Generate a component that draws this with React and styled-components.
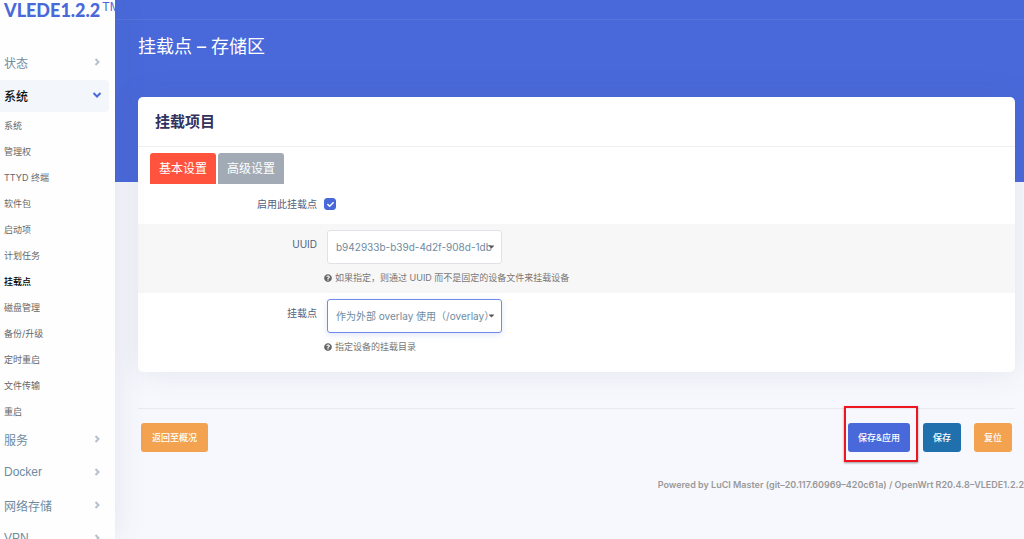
import * as React from 'react';
import styled, {createGlobalStyle} from 'styled-components';
import {FaCaretDown, FaCheck, FaQuestionCircle} from 'react-icons/fa';

const MENU = [
    {title: '状态'},
    {
        title: '系统',
        open: true,
        items: ['系统', '管理权', 'TTYD 终端', '软件包', '启动项', '计划任务', '挂载点', '磁盘管理', '备份/升级', '定时重启', '文件传输', '重启'],
    },
    {title: '服务'},
    {title: 'Docker'},
    {title: '网络存储'},
    {title: 'VPN'},
];

const GlobalStyle = createGlobalStyle`
  * { box-sizing: border-box; }
  body {
    margin: 0;
    background: #f7f8fd;
    font-family: Inter, "Noto Sans CJK SC", sans-serif;
  }
  button, select, input { font-family: inherit; }
`;

const Page = styled.div`
  display: flex;
  height: 100vh;
  overflow: hidden;
`;

const Sidebar = styled.nav`
  flex: 0 0 115px;
  overflow: hidden;
  background: #fefefe;
  box-shadow: 0 0 30px rgba(80, 90, 130, 0.12);
  z-index: 1;
`;

const Logo = styled.a`
  display: flex;
  align-items: flex-start;
  height: 47px;
  padding-left: 4px;
  color: #4969da;
  font-family: Lato, sans-serif;
  font-size: 18px;
  font-weight: 900;
  line-height: 20px;
  text-decoration: none;
  white-space: nowrap;
`;

const Trademark = styled.span`
  margin-left: 2px;
  font-family: "Liberation Sans", sans-serif;
  font-size: 12px;
  font-weight: 400;
  line-height: 14px;
`;

const MenuLink = styled.a`
  display: flex;
  align-items: center;
  justify-content: space-between;
  height: 32px;
  margin: 0 6px 1px 0;
  padding: 0 7px 2px 4px;
  border-radius: 0 4px 4px 0;
  background: ${props => props.$open ? '#f3f7fb' : 'transparent'};
  color: ${props => props.$open ? '#111' : '#6f8ba1'};
  font-family: "Liberation Sans", "Noto Sans CJK SC", sans-serif;
  font-size: 12px;
  font-weight: ${props => props.$open ? 500 : 400};
  text-decoration: none;
`;

const Arrow = styled.svg`
  width: 10px;
  height: 10px;
  fill: none;
  stroke: ${props => props.$open ? '#4969da' : '#b8c1ca'};
  stroke-width: 2;
`;

const SubMenu = styled.ul`
  margin: 0 0 -1px;
  padding: 0;
  list-style: none;
`;

const SubLink = styled.a`
  display: block;
  padding-left: 4px;
  color: ${props => props.$active ? '#000' : '#666'};
  font-size: 9px;
  font-weight: ${props => props.$active ? 500 : 400};
  line-height: 26px;
  text-decoration: none;
`;

const Main = styled.main`
  flex: 1;
  min-width: 0;
`;

const Banner = styled.header`
  height: 182px;
  background: #4969da;
`;

const TopBar = styled.div`
  height: 20px;
  border-bottom: 1px solid #5473dc;
`;

const PageTitle = styled.h2`
  margin: 0;
  padding: 15px 23px;
  color: #fff;
  font-size: 18px;
  font-weight: 400;
  line-height: 24px;
`;

const Content = styled.form`
  margin: -85px 9px 0 23px;
`;

const Card = styled.section`
  padding-bottom: 10px;
  border-radius: 5px;
  background: #fff;
  box-shadow: 0 0 30px rgba(80, 90, 130, 0.12);
`;

const CardTitle = styled.h3`
  margin: 0;
  padding: 0 17px;
  border-bottom: 1px solid #eef0f2;
  color: #32325d;
  font-size: 15px;
  font-weight: 700;
  line-height: 49px;
`;

const Tabs = styled.div`
  display: flex;
  gap: 2px;
  padding: 6px 12px 0;
`;

const Tab = styled.button`
  height: 31px;
  padding: 0 9px 2px;
  border: 0;
  border-radius: 3px 3px 0 0;
  background: ${props => props.$active ? '#ff533d' : '#a2abb5'};
  color: #fff;
  font-size: 12px;
  cursor: pointer;
`;

const Row = styled.div`
  display: grid;
  grid-template-columns: 179px 1fr;
  column-gap: 7px;
  padding: ${props => props.$compact ? '10px 0' : '6px 0 5px'};
  background: ${props => props.$shaded ? '#f7f7f7' : 'transparent'};
`;

const Label = styled.label`
  padding-top: ${props => props.$compact ? 0 : 4}px;
  color: #525f7f;
  font-size: 10px;
  line-height: 20px;
  text-align: right;
`;

const CheckWrap = styled.span`
  display: grid;
  width: 12px;
  height: 12px;
  margin: 4px 0;
  place-items: center;

  > * { grid-area: 1 / 1; }

  svg {
    width: 7px;
    height: 7px;
    color: #fff;
    pointer-events: none;
    z-index: 1;
  }
`;

const Checkbox = styled.input`
  width: 12px;
  height: 12px;
  margin: 0;
  border: 1px solid #4969da;
  border-radius: 3px;
  background: #4969da;
  appearance: none;
`;

const SelectWrap = styled.div`
  position: relative;
  width: 175px;
  margin-left: 3px;

  svg {
    position: absolute;
    top: 12px;
    right: 6px;
    width: 9px;
    height: 9px;
    color: #555;
    pointer-events: none;
  }
`;

const Select = styled.select`
  display: block;
  width: 100%;
  height: 34px;
  padding: 0 8px;
  border: 1px solid ${props => props.$focused ? '#7389e8' : '#dfe3e8'};
  border-radius: 3px;
  background: #fff;
  box-shadow: ${props => props.$focused ? '0 2px 6px rgba(73, 105, 218, 0.16)' : 'none'};
  color: #6f8ba1;
  font-size: 10px;
  appearance: none;
`;

const Hint = styled.p`
  display: flex;
  align-items: center;
  gap: 3px;
  margin: 4px 0 0;
  color: #777;
  font-size: 9px;
  line-height: 20px;

  svg {
    width: 8px;
    height: 8px;
    color: #666;
  }
`;

const Actions = styled.div`
  display: flex;
  gap: 13px;
  margin-top: 36px;
  padding: 14px 3px;
  border-top: 1px solid #e8eaee;
`;

const ActionButton = styled.button`
  height: 29px;
  padding: 0 ${props => props.$wide ? 11 : 10}px;
  border: 0;
  border-radius: 3px;
  background: ${props => props.$color};
  color: #fff;
  font-size: 9px;
  font-weight: 500;
  cursor: pointer;
`;

const Spacer = styled.span`
  flex: 1;
`;

const Highlight = styled.span`
  position: relative;

  &::after {
    position: absolute;
    inset: -17px -8px -10px -4px;
    border: 2px solid #ee1620;
    box-shadow: 0 1px 2px rgba(0, 0, 0, 0.4);
    content: '';
    pointer-events: none;
  }
`;

const Footer = styled.footer`
  margin-top: 9px;
  color: #999;
  font-size: 9px;
  font-weight: 600;
  line-height: 20px;
  text-align: right;
  white-space: nowrap;
`;

const SideMenu = () => (
    <Sidebar>
        <Logo href="#">VLEDE1.2.2<Trademark>TM</Trademark></Logo>
        {MENU.map(({title, open, items}) => (
            <React.Fragment key={title}>
                <MenuLink href="#" $open={open}>
                    {title}
                    <Arrow viewBox="0 0 10 10" $open={open}>
                        <path d={open ? 'M1.5 3L5 6.5L8.5 3' : 'M3.5 2L6.5 5L3.5 8'}/>
                    </Arrow>
                </MenuLink>
                {items && <SubMenu>
                    {items.map(item => (
                        <li key={item}>
                            <SubLink href="#" $active={item === '挂载点'}>{item}</SubLink>
                        </li>
                    ))}
                </SubMenu>}
            </React.Fragment>
        ))}
    </Sidebar>
);

const SelectField = ({id, label, option, hint, shaded, focused}) => (
    <Row $shaded={shaded}>
        <Label htmlFor={id}>{label}</Label>
        <div>
            <SelectWrap>
                <Select id={id} $focused={focused}>
                    <option>{option}</option>
                </Select>
                <FaCaretDown/>
            </SelectWrap>
            <Hint><FaQuestionCircle/>{hint}</Hint>
        </div>
    </Row>
);

export default class App extends React.Component {

    render() {
        return <Page>
            <GlobalStyle/>
            <SideMenu/>
            <Main>
                <Banner>
                    <TopBar/>
                    <PageTitle>挂载点 – 存储区</PageTitle>
                </Banner>
                <Content>
                    <Card>
                        <CardTitle>挂载项目</CardTitle>
                        <Tabs>
                            <Tab type="button" $active>基本设置</Tab>
                            <Tab type="button">高级设置</Tab>
                        </Tabs>
                        <Row $compact>
                            <Label $compact htmlFor="enabled">启用此挂载点</Label>
                            <CheckWrap>
                                <Checkbox id="enabled" type="checkbox" defaultChecked/>
                                <FaCheck/>
                            </CheckWrap>
                        </Row>
                        <SelectField id="uuid" label="UUID" shaded
                                     option="b942933b-b39d-4d2f-908d-1db"
                                     hint="如果指定，则通过 UUID 而不是固定的设备文件来挂载设备"/>
                        <SelectField id="target" label="挂载点" focused
                                     option="作为外部 overlay 使用（/overlay）"
                                     hint="指定设备的挂载目录"/>
                    </Card>
                    <Actions>
                        <ActionButton type="button" $wide $color="#f3a24f">返回至概况</ActionButton>
                        <Spacer/>
                        <Highlight>
                            <ActionButton type="submit" $color="#4969da">保存&amp;应用</ActionButton>
                        </Highlight>
                        <ActionButton type="button" $color="#1f70ad">保存</ActionButton>
                        <ActionButton type="reset" $color="#f3a24f">复位</ActionButton>
                    </Actions>
                </Content>
                <Footer>Powered by LuCI Master (git–20.117.60969–420c61a) / OpenWrt R20.4.8–VLEDE1.2.2</Footer>
            </Main>
        </Page>
    }
}
